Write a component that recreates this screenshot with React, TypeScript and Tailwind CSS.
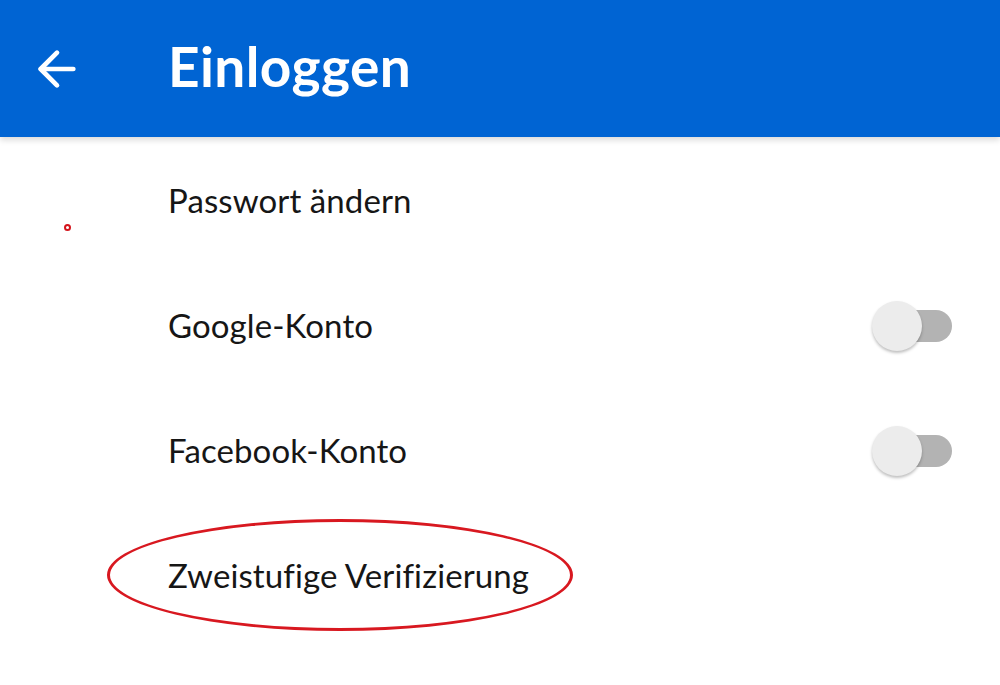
import { ArrowLeft } from "lucide-react";

function Toggle() {
    return (
        <div className="relative w-[80px] h-[50px] flex items-center">
            <div className="absolute right-0 w-[62px] h-[32px] rounded-full bg-[#b3b3b3]" />
            <div className="absolute left-0 w-[50px] h-[50px] rounded-full bg-[#ececec] shadow-[0_2px_3px_rgba(0,0,0,0.25)]" />
        </div>
    );
}

const rows = [
    { label: "Passwort ändern", toggle: false },
    { label: "Google-Konto", toggle: true },
    { label: "Facebook-Konto", toggle: true },
    { label: "Zweistufige Verifizierung", toggle: false },
];

export default function App() {
    return (
        <main
            className="relative w-[1000px] h-[685px] bg-white overflow-hidden"
            style={{ fontFamily: "Lato, 'Noto Sans', sans-serif" }}
        >
            <header className="h-[137px] bg-[#0064d3] flex items-center shadow-[0_3px_6px_rgba(0,0,0,0.15)] relative z-10">
                <div className="w-[168px] pl-[29px] flex items-center">
                    <ArrowLeft className="text-white w-[56px] h-[56px]" strokeWidth={2} />
                </div>
                <h1 className="text-white text-[55px] font-bold leading-none tracking-[0.4px] -mt-[4px]">
                    Einloggen
                </h1>
            </header>

            <ul className="pt-[1px]">
                {rows.map((row) => (
                    <li
                        key={row.label}
                        className="h-[125px] flex items-center pl-[168px] pr-[48px] justify-between"
                    >
                        <span className="text-[33px] text-[#161616] tracking-[0.1px]">
                            {row.label}
                        </span>
                        {row.toggle && <Toggle />}
                    </li>
                ))}
            </ul>

            {/* red marker annotations */}
            <div className="absolute left-[64px] top-[224px] w-[7px] h-[7px] rounded-full border-2 border-[#d4141c]" />
            <div className="absolute left-[107px] top-[519px] w-[466px] h-[112px] rounded-[50%] border-[3px] border-[#d81820]" />
        </main>
    );
}
